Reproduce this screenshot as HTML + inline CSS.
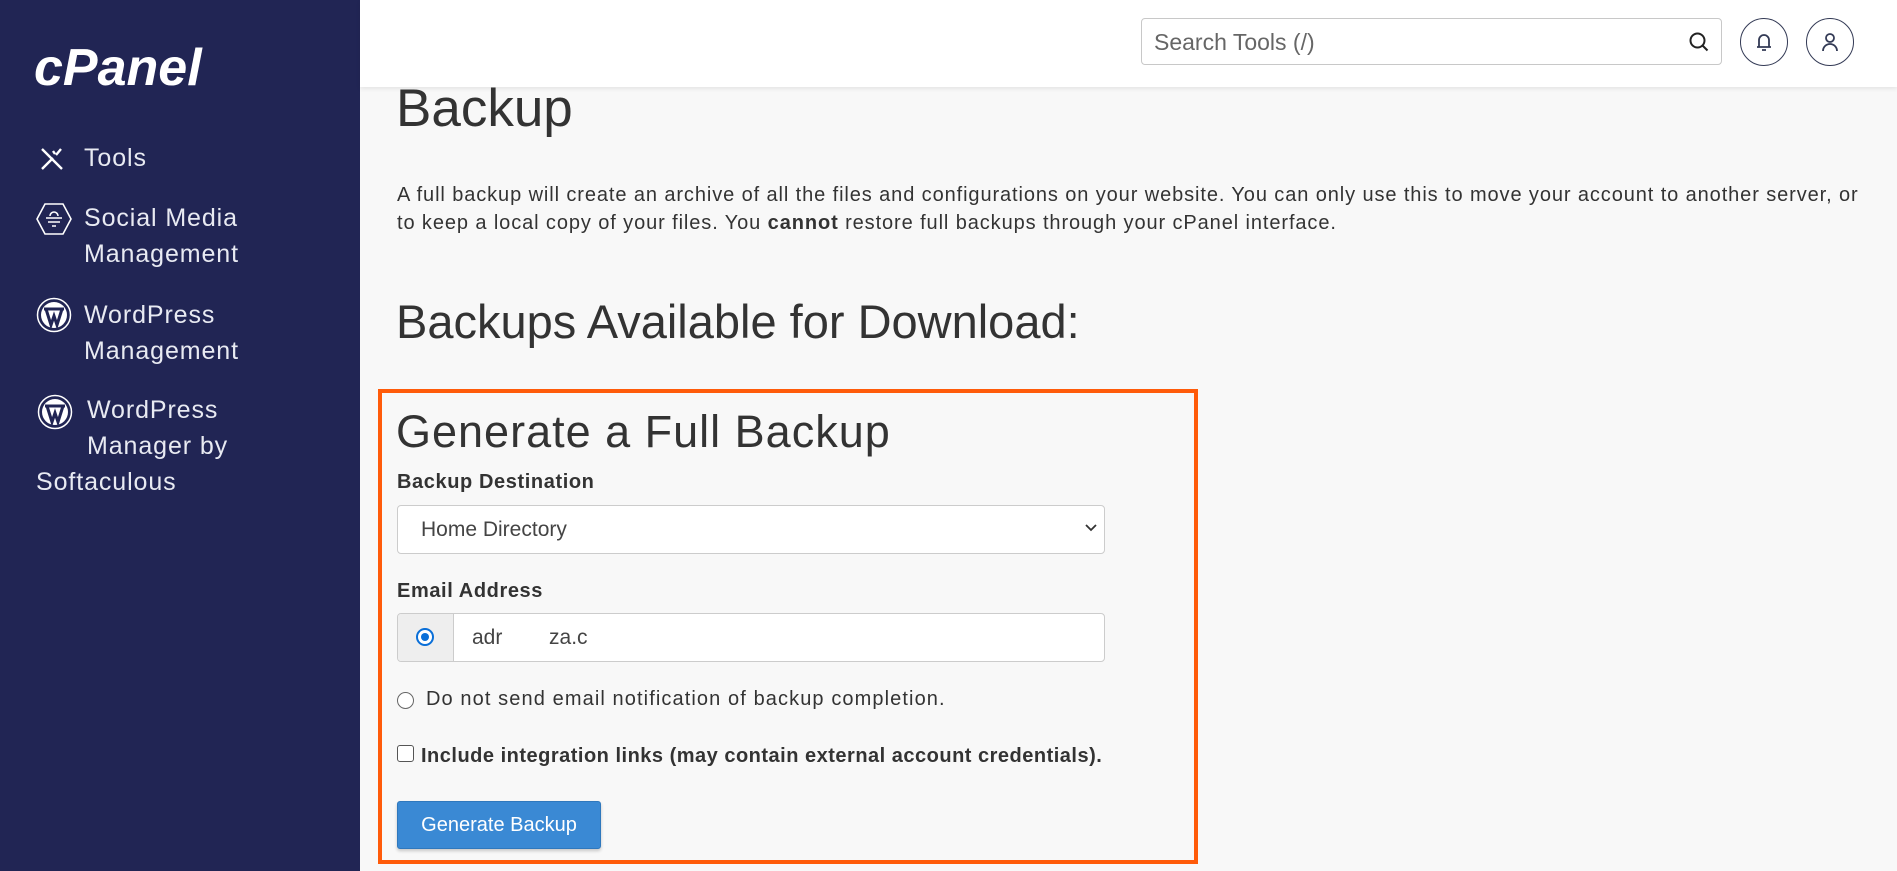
<!DOCTYPE html>
<html><head><meta charset="utf-8"><style>
*{margin:0;padding:0;box-sizing:border-box}
body{width:1897px;height:871px;overflow:hidden;background:#f8f8f8;font-family:"Liberation Sans",sans-serif;color:#333;position:relative}
.side{position:absolute;left:0;top:0;width:360px;height:871px;background:#212554;color:#e8eaf2}
.logo{position:absolute;left:34px;top:38px;font-size:52px;font-weight:bold;font-style:italic;color:#fff;letter-spacing:0px}
.nav{position:absolute;font-size:25px;line-height:36px;color:#e8eaf2;letter-spacing:0.9px}
.ic{position:absolute}
.hdr{position:absolute;left:360px;top:0;width:1537px;height:87px;background:#fff;box-shadow:0 2px 4px rgba(0,0,0,.08)}
.search{position:absolute;left:1141px;top:18px;width:581px;height:47px;border:1px solid #c8c8c8;border-radius:4px;background:#fff;font-size:23px;color:#666;padding:10px 12px}
.circ{position:absolute;top:18px;width:48px;height:48px;border:1.5px solid #333a55;border-radius:50%}
.a{position:absolute;white-space:nowrap}
</style></head><body>
<div class="side">
 <div class="logo">cPanel</div>
 <svg class="ic" style="left:39px;top:146px" width="26" height="26" viewBox="0 0 26 26" fill="none" stroke="#fff" stroke-width="2.4"><path d="M3 3l20 20M3 23l11-11M17 9l5-6M14 5l2 3"/></svg>
 <div class="nav" style="left:84px;top:200px;top:140px">Tools</div>
 <svg class="ic" style="left:36px;top:203px" width="36" height="32" viewBox="0 0 36 32" fill="none" stroke="#fff" stroke-width="1.6"><path d="M9 1h18l8 15-8 15H9L1 16z"/><path d="M10 15h16M12 19h12M14 13a4 4 0 0 1 8 0M16 23h4"/></svg>
 <div class="nav" style="left:84px;top:200px">Social Media<br>Management</div>
 <svg class="ic" style="left:36px;top:297px" width="36" height="36" viewBox="0 0 36 36"><circle cx="18" cy="18" r="16.5" fill="none" stroke="#fff" stroke-width="1.5"/><circle cx="18" cy="18" r="13" fill="#fff"/><path d="M8 12h20M10 12l5 16 3-9 3 9 5-16" stroke="#212554" stroke-width="3" fill="none"/></svg>
 <div class="nav" style="left:84px;top:297px">WordPress<br>Management</div>
 <svg class="ic" style="left:37px;top:394px" width="36" height="36" viewBox="0 0 36 36"><circle cx="18" cy="18" r="16.5" fill="none" stroke="#fff" stroke-width="1.5"/><circle cx="18" cy="18" r="13" fill="#fff"/><path d="M8 12h20M10 12l5 16 3-9 3 9 5-16" stroke="#212554" stroke-width="3" fill="none"/></svg>
 <div class="nav" style="left:87px;top:392px">WordPress<br>Manager by</div>
 <div class="nav" style="left:36px;top:464px">Softaculous</div>
</div>
<div class="hdr"></div>
<div class="search">Search Tools (/)</div>
<svg class="ic" style="left:1688px;top:31px" width="22" height="22" viewBox="0 0 22 22" fill="none" stroke="#222" stroke-width="2"><circle cx="9.5" cy="9.5" r="7"/><path d="M14.5 14.5l5 5"/></svg>
<div class="circ" style="left:1740px"></div>
<svg class="ic" style="left:1753px;top:31px" width="22" height="22" viewBox="0 0 22 22" fill="none" stroke="#333a55" stroke-width="1.8"><path d="M6 16V9a5 5 0 0 1 10 0v7M4 16h14M9 19h4"/></svg>
<div class="circ" style="left:1806px"></div>
<svg class="ic" style="left:1819px;top:31px" width="22" height="22" viewBox="0 0 22 22" fill="none" stroke="#333a55" stroke-width="1.8"><circle cx="11" cy="7" r="4"/><path d="M4 20a7 7 0 0 1 14 0"/></svg>

<div class="a" style="left:396px;top:78px;font-size:53px;font-weight:300;color:#333">Backup</div>
<div class="a" style="left:397px;top:181px;font-size:20px;line-height:28px;letter-spacing:0.9px;color:#333;white-space:normal;width:1495px">A full backup will create an archive of all the files and configurations on your website. You can only use this to move your account to another server, or<br>to keep a local copy of your files. You <b>cannot</b> restore full backups through your cPanel interface.</div>
<div class="a" style="left:396px;top:294px;font-size:47px;color:#333">Backups Available for Download:</div>

<div style="position:absolute;left:378px;top:389px;width:820px;height:475px;border:4px solid #ff5b0a"></div>
<div class="a" style="left:396px;top:406px;font-size:45px;letter-spacing:1px;color:#333">Generate a Full Backup</div>
<div class="a" style="left:397px;top:471px;font-size:20px;letter-spacing:0.6px;font-weight:bold;color:#333">Backup Destination</div>
<div style="position:absolute;left:397px;top:505px;width:708px;height:49px;border:1px solid #ccc;border-radius:4px;background:#fff"></div>
<div class="a" style="left:421px;top:518px;font-size:21px;color:#444">Home Directory</div>
<svg class="ic" style="left:1085px;top:523px" width="12" height="10" viewBox="0 0 12 10" fill="none" stroke="#333" stroke-width="1.8"><path d="M1 2l5 5 5-5"/></svg>
<div class="a" style="left:397px;top:580px;font-size:20px;letter-spacing:0.6px;font-weight:bold;color:#333">Email Address</div>
<div style="position:absolute;left:397px;top:613px;width:708px;height:49px;border:1px solid #ccc;border-radius:4px;background:#fff"></div>
<div style="position:absolute;left:398px;top:614px;width:56px;height:47px;background:#eee;border-right:1px solid #ccc;border-radius:3px 0 0 3px"></div>
<div style="position:absolute;left:416px;top:628px;width:18px;height:18px;border:2px solid #0a6fd8;border-radius:50%;background:#fff"><div style="margin:3px;width:8px;height:8px;background:#0a6fd8;border-radius:50%"></div></div>
<div class="a" style="left:472px;top:626px;font-size:21px;color:#444">adr&nbsp;&nbsp;&nbsp;&nbsp;&nbsp;&nbsp;&nbsp;&nbsp;za.c&nbsp;&nbsp;&nbsp;&nbsp;</div>
<div style="position:absolute;left:397px;top:692px;width:17px;height:17px;border:1.5px solid #666;border-radius:50%;background:#fff"></div>
<div class="a" style="left:426px;top:688px;font-size:20px;letter-spacing:1.1px;color:#333">Do not send email notification of backup completion.</div>
<div style="position:absolute;left:397px;top:745px;width:17px;height:17px;border:1.5px solid #555;border-radius:3px;background:#fff"></div>
<div class="a" style="left:421px;top:745px;font-size:20px;letter-spacing:0.5px;font-weight:bold;color:#333">Include integration links (may contain external account credentials).</div>
<div style="position:absolute;left:397px;top:801px;width:204px;height:48px;background:#3a89d4;border:1px solid #2f78bd;border-radius:3px;box-shadow:0 2px 3px rgba(0,0,0,.2);color:#fff;font-size:20px;text-align:center;line-height:46px">Generate Backup</div>
</body></html>
